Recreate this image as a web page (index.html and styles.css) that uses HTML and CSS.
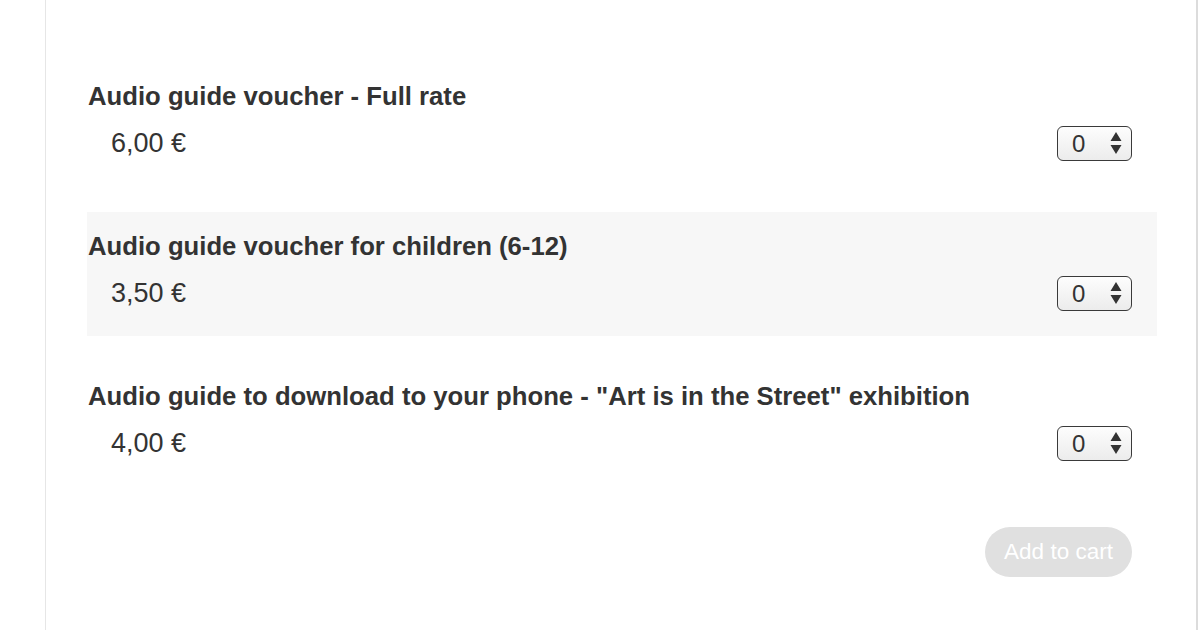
FILE: index.html
```html
<!DOCTYPE html>
<html lang="en">
<head>
    <meta charset="UTF-8">
    <meta name="viewport" content="width=device-width, initial-scale=1.0">
    <title>Audio guides</title>
    <link rel="stylesheet" href="styles.css">
</head>
<body>
    <div class="panel">
        <div class="product">
            <h3 class="product-name">Audio guide voucher - Full rate</h3>
            <div class="product-line">
                <span class="price">6,00 €</span>
                <span class="qty">
                    <select>
                        <option>0</option><option>1</option><option>2</option><option>3</option>
                    </select>
                    <svg class="qty-arrows" width="12" height="22" viewBox="0 0 12 22"><path d="M6 0 L11.5 9 L0.5 9 Z M0.5 13 L11.5 13 L6 22 Z" fill="#333"/></svg>
                </span>
            </div>
        </div>
        <div class="product alt">
            <h3 class="product-name">Audio guide voucher for children (6-12)</h3>
            <div class="product-line">
                <span class="price">3,50 €</span>
                <span class="qty">
                    <select>
                        <option>0</option><option>1</option><option>2</option><option>3</option>
                    </select>
                    <svg class="qty-arrows" width="12" height="22" viewBox="0 0 12 22"><path d="M6 0 L11.5 9 L0.5 9 Z M0.5 13 L11.5 13 L6 22 Z" fill="#333"/></svg>
                </span>
            </div>
        </div>
        <div class="product">
            <h3 class="product-name">Audio guide to download to your phone - "Art is in the Street" exhibition</h3>
            <div class="product-line">
                <span class="price">4,00 €</span>
                <span class="qty">
                    <select>
                        <option>0</option><option>1</option><option>2</option><option>3</option>
                    </select>
                    <svg class="qty-arrows" width="12" height="22" viewBox="0 0 12 22"><path d="M6 0 L11.5 9 L0.5 9 Z M0.5 13 L11.5 13 L6 22 Z" fill="#333"/></svg>
                </span>
            </div>
        </div>
        <div class="actions">
            <button class="add-cart" disabled>Add to cart</button>
        </div>
    </div>
</body>
</html>
```

FILE: styles.css
```css
body {
    margin: 0;
    background: #fff;
    font-family: "Liberation Sans", Arial, sans-serif;
    color: #333;
}
.panel {
    margin-left: 45px;
    width: 1153px;
    min-height: 630px;
    box-sizing: border-box;
    border-left: 1px solid #e6e6e6;
    border-right: 2px solid #dcdcdc;
    padding: 62px 39px 0 41px;
}
.product {
    padding: 19px 25px 26px 1px;
    margin-bottom: 26px;
}
.product.alt {
    background-color: #f7f7f7;
}
.product-name {
    margin: 0;
    font-size: 25.7px;
    line-height: 30px;
    font-weight: bold;
}
.product-line {
    display: flex;
    align-items: center;
    justify-content: space-between;
    height: 34px;
    margin-top: 15px;
}
.price {
    padding-left: 23px;
    font-size: 27px;
}
.qty {
    position: relative;
    display: inline-block;
}
.qty select {
    appearance: none;
    -webkit-appearance: none;
    width: 75px;
    height: 35px;
    padding: 0 0 0 14px;
    border: 1.5px solid #3a3a3a;
    border-radius: 6px;
    background: linear-gradient(#fdfdfd, #ececec);
    font-family: "Liberation Sans", Arial, sans-serif;
    font-size: 24px;
    color: #333;
}
.qty-arrows {
    position: absolute;
    right: 10px;
    top: 6px;
    pointer-events: none;
}
.actions {
    display: flex;
    justify-content: flex-end;
    padding-right: 25px;
    margin-top: 41px;
}
.add-cart {
    width: 147px;
    height: 50px;
    border: none;
    border-radius: 25px;
    background-color: #e0e0e0;
    color: #fff;
    font-family: "Liberation Sans", Arial, sans-serif;
    font-size: 22.5px;
}
```
